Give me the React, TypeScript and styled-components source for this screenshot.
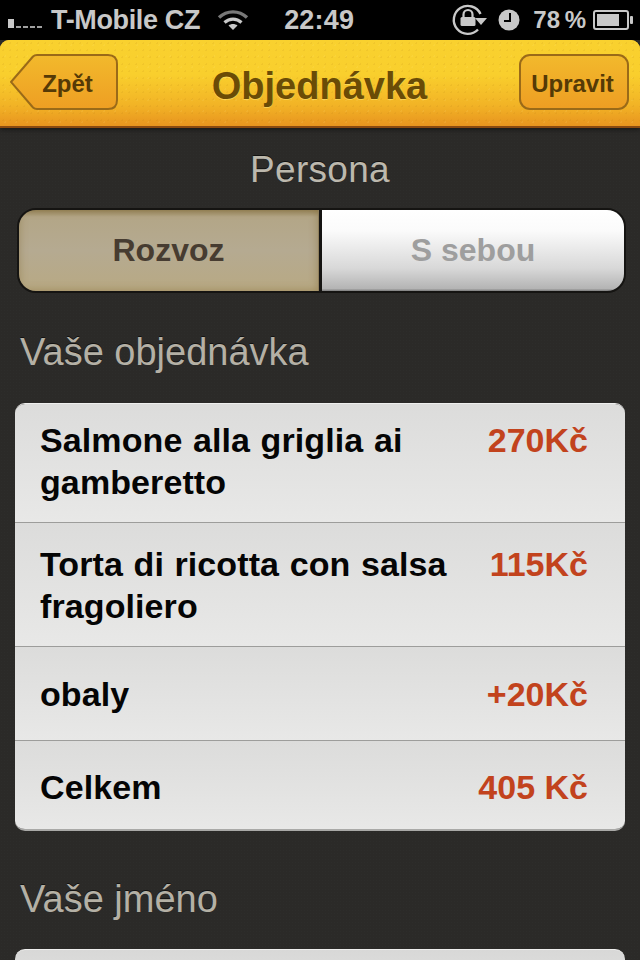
import { FC } from 'react';
import styled, { createGlobalStyle } from 'styled-components';

const GlobalStyle = createGlobalStyle`
  html, body {
    margin: 0;
    padding: 0;
    background: #2b2a28;
  }
  * {
    box-sizing: border-box;
  }
`;

const Screen = styled.div`
  width: 640px;
  height: 960px;
  overflow: hidden;
  font-family: 'Liberation Sans', Arial, sans-serif;
  background-color: #2b2a28;
  background-image: radial-gradient(rgba(255, 255, 255, 0.012) 1px, transparent 1px);
  background-size: 3px 3px;
`;

const StatusBar = styled.div`
  height: 40px;
  background: #000;
  color: #c8c8c8;
  display: flex;
  align-items: center;
  padding: 0 5px 0 8px;
  font-size: 27px;
  font-weight: 700;
`;

const Signal = styled.div`
  display: flex;
  align-items: flex-end;
  gap: 2px;
  height: 20px;
  padding-bottom: 2px;
  margin-right: 9px;
`;

const SignalBar = styled.span<{ $on?: boolean }>`
  width: ${(p) => (p.$on ? 6 : 5)}px;
  height: ${(p) => (p.$on ? 9 : 2)}px;
  background: #c8c8c8;
  opacity: ${(p) => (p.$on ? 1 : 0.8)};
`;

const Carrier = styled.span`
  letter-spacing: -0.35px;
  margin-right: 17px;
`;

const Clock = styled.span`
  margin-left: 35px;
  letter-spacing: 0.2px;
`;

const StatusRight = styled.div`
  margin-left: auto;
  display: flex;
  align-items: center;
`;

const AlarmSlot = styled.span`
  display: flex;
  margin: 0 13px 0 11px;
`;

const BatteryLabel = styled.span`
  font-size: 24px;
  margin-right: 7px;
  word-spacing: -2px;
`;

const NavBar = styled.header`
  height: 88px;
  border-radius: 9px 9px 0 0;
  border-bottom: 2px solid #8a4a10;
  background-color: #f5c029;
  background-image: radial-gradient(rgba(150, 100, 10, 0.09) 1px, transparent 1px),
    radial-gradient(rgba(255, 240, 150, 0.1) 1px, transparent 1px),
    linear-gradient(#f9d12f 0%, #f9cf2d 40%, #f2b426 75%, #e8951f 100%);
  background-size: 7px 7px, 11px 11px, 100% 100%;
  box-shadow: 0 2px 4px rgba(0, 0, 0, 0.4);
  display: grid;
  grid-template-columns: 1fr auto 1fr;
  align-items: center;
  padding: 0 11px 2px 10px;
`;

const NavTitle = styled.h1`
  margin: 0;
  font-size: 38px;
  font-weight: 700;
  color: #6a4c06;
  text-shadow: 0 1px 0 rgba(255, 235, 130, 0.5);
  position: relative;
  top: 4px;
`;

const BackButton = styled.button`
  position: relative;
  justify-self: start;
  width: 108px;
  height: 56px;
  padding: 4px 0 0 7px;
  border: 0;
  background: none;
  font: 700 24px 'Liberation Sans', Arial, sans-serif;
  color: #553a06;

  svg {
    position: absolute;
    left: 0;
    top: 0;
  }

  span {
    position: relative;
  }
`;

const EditButton = styled.button`
  justify-self: end;
  width: 110px;
  height: 56px;
  padding: 3px 3px 0 0;
  border: 2px solid #9a6a18;
  border-radius: 11px;
  background: linear-gradient(#f2b92c, #ee9e23);
  font: 700 24px 'Liberation Sans', Arial, sans-serif;
  color: #553a06;
`;

const Content = styled.main`
  padding: 0 15px;
`;

const Persona = styled.div`
  text-align: center;
  font-size: 37px;
  letter-spacing: 0.3px;
  color: #bcb8ad;
  line-height: 42px;
  margin-top: 21px;
  text-shadow: 0 -1px 0 rgba(0, 0, 0, 0.6);
`;

const Segmented = styled.div`
  display: grid;
  grid-template-columns: 300px 1fr;
  width: 609px;
  height: 85px;
  margin: 17px 0 0 2px;
  border: 2px solid #151412;
  border-radius: 19px;
  overflow: hidden;
  background: #151412;
`;

const Segment = styled.div<{ $active?: boolean }>`
  display: flex;
  align-items: center;
  justify-content: center;
  font-size: 32px;
  font-weight: 700;
  color: ${(p) => (p.$active ? '#473c31' : '#9e9e9e')};
  background: ${(p) =>
    p.$active
      ? 'linear-gradient(#9a8860 0, #b3a687 7px, #b5aa91 50%, #b8a983 100%)'
      : 'linear-gradient(#fff 0%, #fbfbfb 25%, #d8d8d8 72%, #b4b4b4 97%, #7c7c7c 100%)'};
  box-shadow: ${(p) => (p.$active ? 'inset 0 0 8px rgba(120, 95, 40, 0.45)' : 'none')};
  border-right: ${(p) => (p.$active ? '1px solid #8f7f5c' : '0')};
  margin-left: ${(p) => (p.$active ? 0 : 3)}px;
`;

const SectionTitle = styled.h2`
  margin: 0;
  padding-left: 5px;
  font-size: 38px;
  font-weight: 400;
  line-height: 42px;
  color: #b4b0a5;
  text-shadow: 0 -1px 0 rgba(0, 0, 0, 0.6);
`;

const OrderTitle = styled(SectionTitle)`
  margin-top: 38px;
`;

const NameTitle = styled(SectionTitle)`
  margin-top: 47px;
`;

const Card = styled.section`
  margin-top: 30px;
  border-radius: 10px;
  overflow: hidden;
  border-top: 1px solid #efefee;
  border-bottom: 2px solid #a9a9a7;
`;

const NameCard = styled(Card)`
  height: 40px;
  margin-top: 29px;
  background: linear-gradient(#d8d8d7, #e0e0df);
`;

const Row = styled.div<{ $height: number; $top: number }>`
  display: flex;
  justify-content: space-between;
  align-items: flex-start;
  height: ${(p) => p.$height}px;
  padding: ${(p) => p.$top}px 37px 0 25px;
  border-bottom: 1px solid #9d9d9b;
  background: linear-gradient(#dcdcdb, #e8e8e7);

  &:last-child {
    border-bottom: 0;
  }
`;

const ItemName = styled.div`
  width: 425px;
  font-size: 34px;
  font-weight: 700;
  line-height: 42px;
  color: #050505;
  letter-spacing: 0.1px;
  word-spacing: 1px;
`;

const Price = styled.div`
  font-size: 34px;
  font-weight: 700;
  line-height: 42px;
  color: #c2431d;
  white-space: nowrap;
`;

const WifiIcon: FC = () => (
  <svg width="32" height="24" viewBox="0 0 32 24" fill="none" stroke="#c8c8c8">
    <path d="M2 9.500C10 2 22 2 30 9.500" strokeWidth="3.400" opacity="0.6" />
    <path d="M7.500 14.500C12.500 10 19.500 10 24.500 14.500" strokeWidth="3.200" />
    <path d="M16 22l-4.500-4.500c2.500-2 6.500-2 9 0z" fill="#c8c8c8" stroke="none" />
  </svg>
);

const RotationIcon: FC = () => (
  <svg width="36" height="34" viewBox="0 0 36 34" fill="none">
    <path d="M27 26.500A14 14 0 1 1 29.500 11" stroke="#c8c8c8" strokeWidth="2.400" />
    <path d="M24 15h12l-6 7z" fill="#c8c8c8" />
    <path d="M12.500 14v-2.500a4.500 4.500 0 0 1 9 0V14" stroke="#c8c8c8" strokeWidth="2.200" />
    <rect x="9.500" y="14" width="15" height="9" rx="1.500" fill="#c8c8c8" />
  </svg>
);

const AlarmIcon: FC = () => (
  <svg width="22" height="22" viewBox="0 0 22 22">
    <circle cx="11" cy="11" r="10.500" fill="#c8c8c8" />
    <path d="M12 4v8H6" fill="none" stroke="#000" strokeWidth="2" />
  </svg>
);

const BatteryIcon: FC = () => (
  <svg width="42" height="20" viewBox="0 0 42 20">
    <rect x="1" y="1" width="34" height="18" rx="2" fill="none" stroke="#c8c8c8" strokeWidth="2" />
    <rect x="4" y="4" width="22" height="12" fill="#c8c8c8" />
    <rect x="37" y="6" width="3" height="8" rx="1" fill="#c8c8c8" />
  </svg>
);

const BackShape: FC = () => (
  <svg width="108" height="56" viewBox="0 0 108 56">
    <defs>
      <linearGradient id="backFill" x1="0" y1="0" x2="0" y2="1">
        <stop offset="0" stopColor="#f2b92c" />
        <stop offset="1" stopColor="#ee9e23" />
      </linearGradient>
    </defs>
    <path
      d="M1 28L23 2.500Q24.500 1 27 1H98Q107 1 107 10V46Q107 55 98 55H27Q24.500 55 23 53.500Z"
      fill="url(#backFill)"
      stroke="#9a6a18"
      strokeWidth="2"
    />
  </svg>
);

const App: FC = () => {
  const items = [
    { name: 'Salmone alla griglia ai gamberetto', price: '270Kč', height: 119, top: 15 },
    { name: 'Torta di ricotta con salsa fragoliero', price: '115Kč', height: 124, top: 20 },
    { name: 'obaly', price: '+20Kč', height: 94, top: 26 },
    { name: 'Celkem', price: '405 Kč', height: 88, top: 25 },
  ];

  return (
    <Screen>
      <GlobalStyle />
      <StatusBar>
        <Signal>
          <SignalBar $on />
          <SignalBar />
          <SignalBar />
          <SignalBar />
          <SignalBar />
        </Signal>
        <Carrier>T-Mobile CZ</Carrier>
        <WifiIcon />
        <Clock>22:49</Clock>
        <StatusRight>
          <RotationIcon />
          <AlarmSlot>
            <AlarmIcon />
          </AlarmSlot>
          <BatteryLabel>78 %</BatteryLabel>
          <BatteryIcon />
        </StatusRight>
      </StatusBar>
      <NavBar>
        <BackButton>
          <BackShape />
          <span>Zpět</span>
        </BackButton>
        <NavTitle>Objednávka</NavTitle>
        <EditButton>Upravit</EditButton>
      </NavBar>
      <Content>
        <Persona>Persona</Persona>
        <Segmented>
          <Segment $active>Rozvoz</Segment>
          <Segment>S sebou</Segment>
        </Segmented>
        <OrderTitle>Vaše objednávka</OrderTitle>
        <Card>
          {items.map((item) => (
            <Row key={item.name} $height={item.height} $top={item.top}>
              <ItemName>{item.name}</ItemName>
              <Price>{item.price}</Price>
            </Row>
          ))}
        </Card>
        <NameTitle>Vaše jméno</NameTitle>
        <NameCard />
      </Content>
    </Screen>
  );
};

export default App;
